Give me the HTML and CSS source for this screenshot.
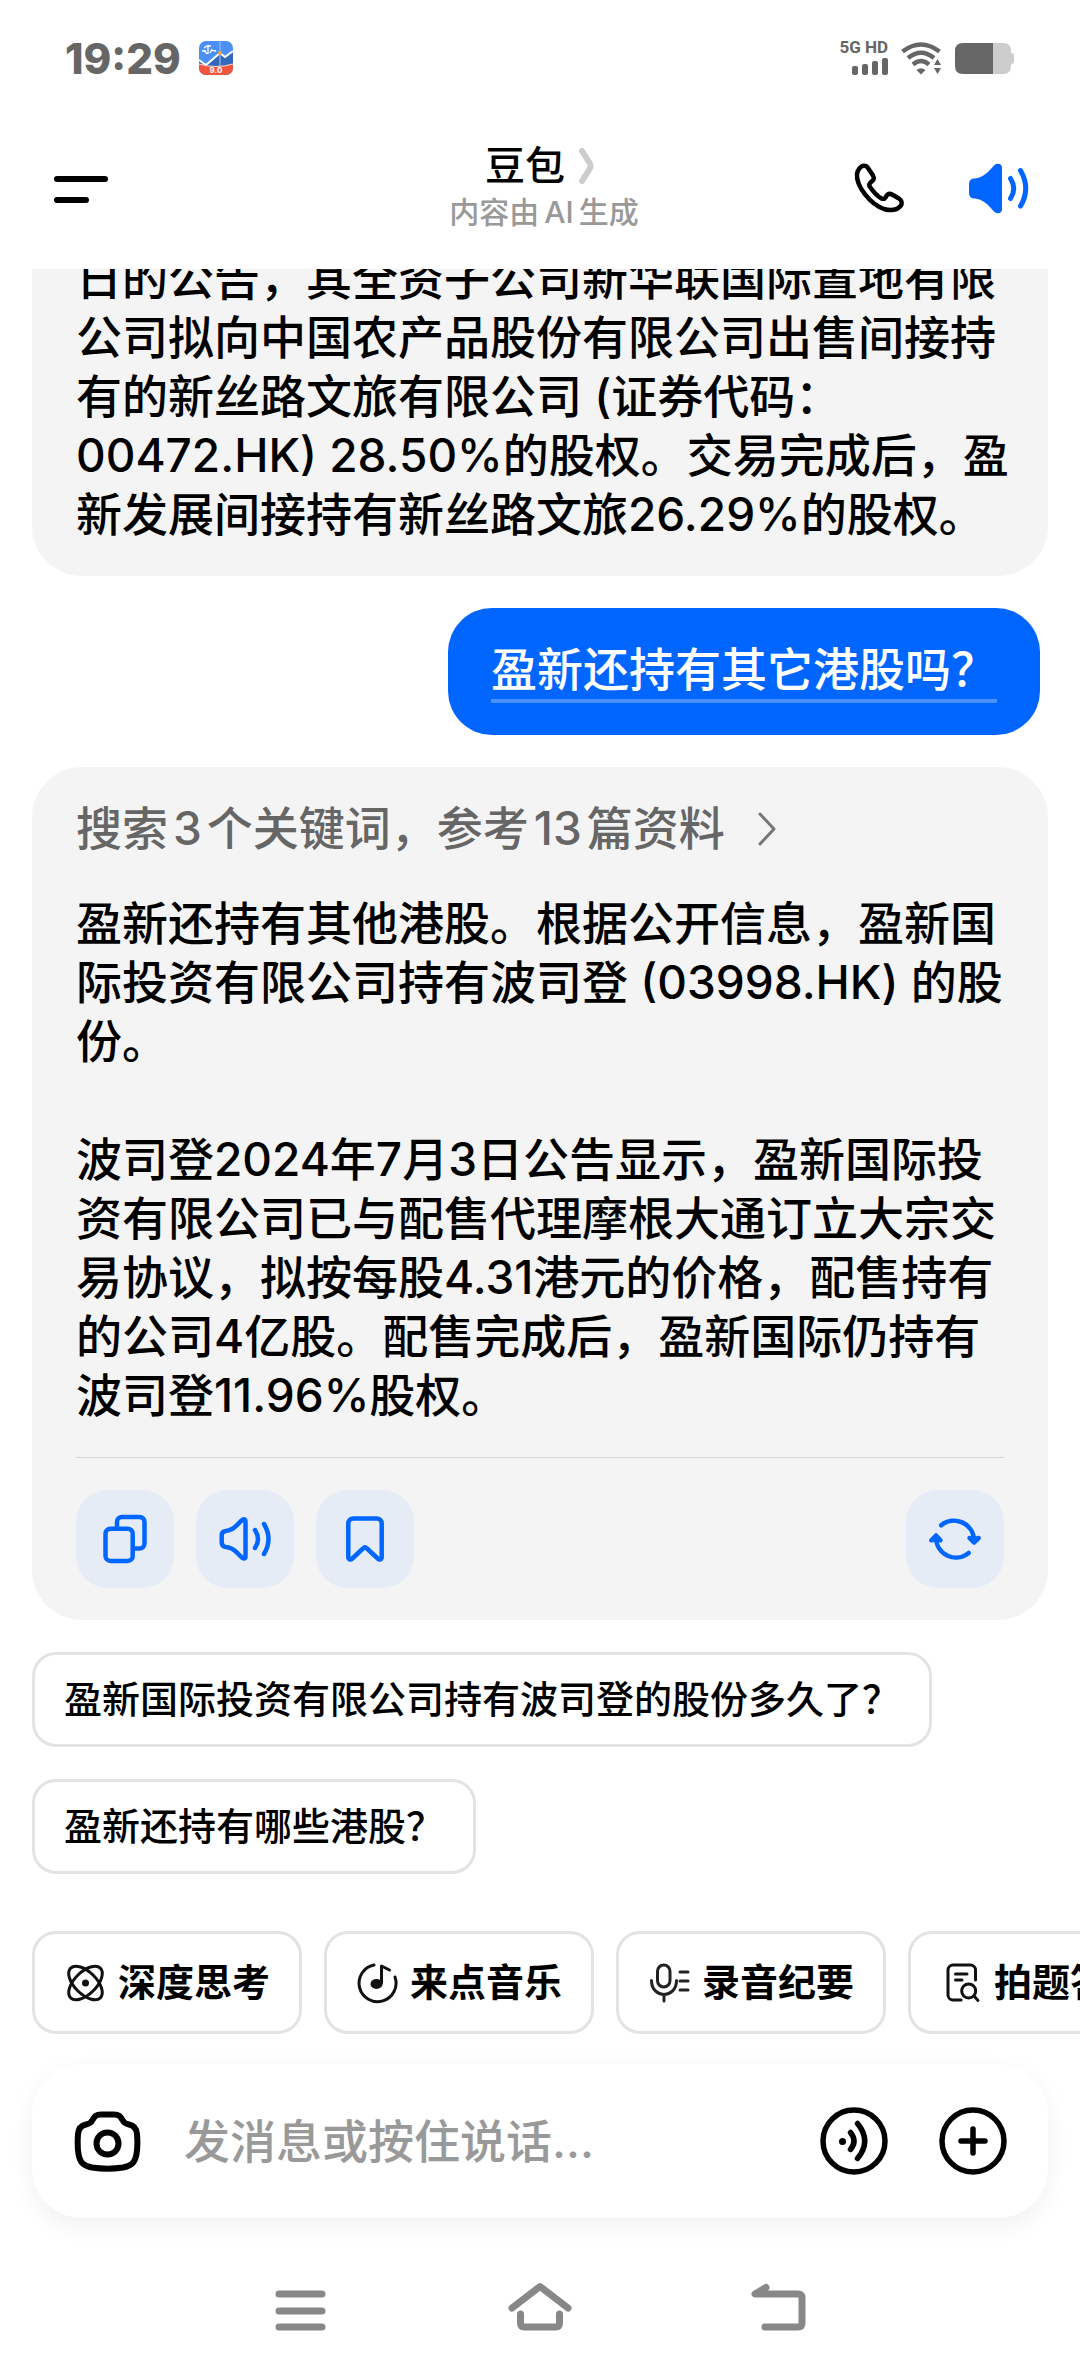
FILE: index.html
```html
<!DOCTYPE html>
<html lang="zh-CN">
<head>
  <meta charset="UTF-8">
  <meta name="viewport" content="width=device-width, initial-scale=1.0">
  <title>豆包</title>
  <link rel="stylesheet" href="styles.css">
</head>
<body>
  <!-- Status bar -->
  <div class="status-bar">
    <span class="clock">19:29</span>
    <svg class="app-icon" width="34" height="34" viewBox="0 0 34 34">
      <defs>
        <clipPath id="app-shape"><rect width="34" height="34" rx="7"/></clipPath>
      </defs>
      <g clip-path="url(#app-shape)">
        <rect width="34" height="34" fill="#4a90f7"/>
        <path d="M0 19l7 5L21 12l5 4 8-6v16H0z" fill="#3468bd"/>
        <path d="M0 19l7 5L21 12l5 4 8-6" fill="none" stroke="#fff" stroke-width="2"/>
        <path d="M21 0v26" stroke="#a9c6ee" stroke-width="1"/>
        <path d="M3 10h4M5 7l3-2h4M9 4v4M12 9l5 1M5 9l3 4M9 8v5M13 8l-2 4" fill="none" stroke="#fff" stroke-width="1.3"/>
        <circle cx="21" cy="12" r="2" fill="#f2a33a"/>
        <path d="M0 23q17 5 34 0v11H0z" fill="#f0563d"/>
        <path d="M0 23q17 5 34 0" fill="none" stroke="#ffd9cf" stroke-width="1"/>
        <text class="app-version" x="17" y="32" text-anchor="middle">9.0</text>
      </g>
    </svg>
    <div class="status-right">
      <div class="signal">
        <span class="network">5G HD</span>
        <svg width="36" height="17" viewBox="0 0 36 17" fill="#666">
          <rect x="0" y="8" width="6" height="9" rx="2"/>
          <rect x="10" y="6" width="6" height="11" rx="2"/>
          <rect x="20" y="3" width="6" height="14" rx="2"/>
          <rect x="30" y="0" width="6" height="17" rx="2"/>
        </svg>
      </div>
      <svg width="41" height="33" viewBox="0 0 41 33">
        <g fill="none" stroke="#666" stroke-width="4.500">
          <path d="M1.500 9.500Q20 -4.500 38.500 9.500"/>
          <path d="M7 16Q20 5.500 33 16"/>
          <path d="M12 22.500Q20 15.500 28 22.500"/>
        </g>
        <path d="M15.500 28q4.500-3.500 9 0L20 32.500z" fill="#666"/>
        <path d="M33 23l3.500-6 3.500 6zM33 26l3.500 6 3.500-6z" fill="#666"/>
      </svg>
      <svg width="60" height="31" viewBox="0 0 60 31">
        <path d="M38 0h10q8 0 8 8v2q3 0 3 3v5q0 3-3 3v2q0 8-8 8H38z" fill="#ccc"/>
        <path d="M8 0h30v31H8q-8 0-8-8V8q0-8 8-8z" fill="#666"/>
      </svg>
    </div>
  </div>

  <!-- Header -->
  <header class="header">
    <button class="icon-btn" aria-label="菜单">
      <svg width="56" height="30" viewBox="0 0 56 30" stroke="#000" stroke-width="6" stroke-linecap="round">
        <path d="M4 5h48M4 26h29"/>
      </svg>
    </button>
    <div class="header-title">
      <a class="title-link" href="#">
        <h1>豆包</h1>
        <svg width="16" height="38" viewBox="0 0 16 38" fill="none" stroke="#ccc" stroke-width="6" stroke-linecap="round" stroke-linejoin="round">
          <path d="M3 4l7 11q3 4 0 8L3 34"/>
        </svg>
      </a>
      <p>内容由<span class="latin">AI</span>生成</p>
    </div>
    <div class="header-actions">
      <button class="icon-btn" aria-label="语音通话">
        <svg width="60" height="60" viewBox="0 0 60 60" fill="none" stroke="#000" stroke-width="4.500" stroke-linejoin="round">
          <path d="M9 10C12 5.500 16 6 18 9L23 16.500C25 20 23 21.500 20.500 23.500C19 25 19 26.500 20 28C23.500 33 27 37 31.500 39.500C33 40.300 34.500 40 35.500 38.500C37 35.500 39 34 42 35.500L49 39.500C52 41.500 52.500 44.500 50.500 47C47 51 41 52 34 50C20 45 6 27 7 15C7.200 13 8 11.500 9 10Z"/>
        </svg>
      </button>
      <button class="icon-btn" aria-label="朗读">
        <svg width="70" height="60" viewBox="0 0 70 60">
          <path d="M4 26c0-5 2-6.500 6-6.500c8-1 13-6 19-13c3-3 8-2 8 2v42c0 4-5 5-8 2c-6-7-11-12-19-13c-4 0-6-1.500-6-6.500z" fill="#06f"/>
          <path d="M45.500 19.500Q52 29.500 45.500 39.500M55.500 11.500Q66 29.500 55.500 47" fill="none" stroke="#06f" stroke-width="5" stroke-linecap="round"/>
        </svg>
      </button>
    </div>
  </header>

  <!-- Conversation -->
  <main class="conversation">
    <article class="card card-scrolled">
      <p>日的公告，其全资子公司新华联国际置地有限公司拟向中国农产品股份有限公司出售间接持有的新丝路文旅有限公司 (证券代码：00472.HK) 28.50%的股权。交易完成后，盈新发展间接持有新丝路文旅26.29%的股权。</p>
    </article>

    <div class="question">
      <span>盈新还持有其它港股吗？</span>
    </div>

    <article class="card card-answer">
      <a class="sources" href="#">
        <span>搜索<span class="latin">3</span>个关键词，参考<span class="latin">13</span>篇资料</span>
        <svg width="22" height="36" viewBox="0 0 22 36" fill="none" stroke="#777" stroke-width="3" stroke-linecap="round" stroke-linejoin="round">
          <path d="M3 3l14 15L3 33"/>
        </svg>
      </a>
      <div class="answer-text">
        <p>盈新还持有其他港股。根据公开信息，盈新国际投资有限公司持有波司登 (03998.HK) 的股份。</p>
        <p>波司登2024年7月3日公告显示，盈新国际投资有限公司已与配售代理摩根大通订立大宗交易协议，拟按每股4.31港元的价格，配售持有的公司4亿股。配售完成后，盈新国际仍持有波司登11.96%股权。</p>
      </div>
      <div class="card-actions">
        <button class="action" aria-label="复制">
          <svg viewBox="0 0 98 98">
            <rect x="29.500" y="38.700" width="27.200" height="32.200" rx="5"/>
            <path d="M41 38V32a5 5 0 0 1 5-5H63.500a5 5 0 0 1 5 5V53.500a5 5 0 0 1-5 5H57"/>
          </svg>
        </button>
        <button class="action" aria-label="播放">
          <svg viewBox="0 0 98 98">
            <path d="M25.700 45.500c0-3 1-4.300 4-4.600c5-.3 8-2.500 11-5.500l5-5c2-2 3.800-1.200 3.800 1v35c0 2.200-1.800 3-3.800 1l-5-5c-3-3-6-5.200-11-5.500c-3-.3-4-1.600-4-4.600z"/>
            <path d="M59 40Q65 49 59 58M68 34Q77 49 68 64"/>
          </svg>
        </button>
        <button class="action" aria-label="收藏">
          <svg viewBox="0 0 98 98">
            <path d="M32.300 33.500a5 5 0 0 1 5-5H60.700a5 5 0 0 1 5 5V67c0 2.500-2 3.300-4 1.500L51 58.500c-1.300-1.300-2.700-1.300-4 0L36.300 68.500c-2 1.800-4 1-4-1.500z"/>
          </svg>
        </button>
        <button class="action action-last" aria-label="重新生成">
          <svg viewBox="0 0 98 98">
            <path d="M35.200 35.300A20 20 0 0 1 68 50M30 48A20 20 0 0 0 62.700 63"/>
            <path d="M63.500 48l4.500 4.500 4.700-4.500-4.700 1zM25.300 50.300L30 45.500l4.500 4.800L30 49z"/>
          </svg>
        </button>
      </div>
    </article>

    <div class="suggestions">
      <button class="suggestion">盈新国际投资有限公司持有波司登的股份多久了？</button>
      <button class="suggestion">盈新还持有哪些港股？</button>
    </div>
  </main>

  <!-- Shortcuts -->
  <nav class="chips">
    <button class="chip">
      <svg width="44" height="44" viewBox="0 0 44 44" fill="none" stroke="#111" stroke-width="3">
        <ellipse cx="21.500" cy="22" rx="21" ry="11" transform="rotate(45 21.500 22)"/>
        <ellipse cx="21.500" cy="22" rx="21" ry="11" transform="rotate(-45 21.500 22)"/>
        <circle cx="21.500" cy="22" r="3.500" fill="#111" stroke="none"/>
      </svg>
      深度思考
    </button>
    <button class="chip">
      <svg width="44" height="44" viewBox="0 0 44 44" fill="none" stroke="#111" stroke-width="3" stroke-linecap="round" stroke-linejoin="round">
        <path d="M18 4A18.500 18.500 0 1 0 39 16M25.500 22V5l8 4"/>
        <ellipse cx="20.500" cy="23" rx="6" ry="5" fill="#111" stroke="none"/>
      </svg>
      来点音乐
    </button>
    <button class="chip">
      <svg width="44" height="44" viewBox="0 0 44 44" fill="none" stroke="#222" stroke-width="3" stroke-linecap="round">
        <rect x="9.500" y="4" width="12.500" height="22" rx="6.200"/>
        <path d="M3.500 19.500C3.500 38 28.500 38 28.500 19.500M16 34v6M32 11h8M32 20h8M32 29h8"/>
      </svg>
      录音纪要
    </button>
    <button class="chip">
      <svg width="44" height="44" viewBox="0 0 44 44" fill="none" stroke="#111" stroke-width="3" stroke-linecap="round">
        <path d="M35.500 19V9a5 5 0 0 0-5-5H13a5 5 0 0 0-5 5V34a5 5 0 0 0 5 5H21M15.500 13H27M15.500 19H22"/>
        <circle cx="28.700" cy="30" r="7"/>
        <path d="M34 35l4 4.500"/>
      </svg>
      拍题答疑
    </button>
  </nav>

  <!-- Composer -->
  <form class="composer">
    <button type="button" class="icon-btn" aria-label="拍照">
      <svg width="68" height="68" viewBox="0 0 68 68" fill="none" stroke="#000" stroke-width="6">
        <path d="M28 7.500H41C46 7.500 47.500 9.500 49.500 13C51 16 53 17 56 17.500C61 18.500 63.500 21.500 64 27C64.600 34 64.600 41 63.500 47C62 56 58 59 50 60.500C40 62 29 62 19 60.500C11 59 7 56 5.500 47C4.500 41 4.500 34 5 27C5.500 21.500 8 18.500 13 17.500C16 17 18 16 19.500 13C21.500 9.500 23 7.500 28 7.500Z"/>
        <circle cx="34.500" cy="36.500" r="11"/>
      </svg>
    </button>
    <input type="text" aria-label="发消息" placeholder="发消息或按住说话...">
    <button type="button" class="icon-btn" aria-label="语音输入">
      <svg width="68" height="68" viewBox="0 0 68 68" fill="none" stroke="#000" stroke-width="5.500" stroke-linecap="round">
        <circle cx="34" cy="34" r="31"/>
        <path d="M30.500 25.500Q37.500 34 30.500 42.500M37.500 16.500Q52 34 37.500 51.500"/>
        <circle cx="22.500" cy="34.500" r="3.500" fill="#000" stroke="none"/>
      </svg>
    </button>
    <button type="button" class="icon-btn" aria-label="更多">
      <svg width="68" height="68" viewBox="0 0 68 68" fill="none" stroke="#000" stroke-width="5.500" stroke-linecap="round">
        <circle cx="34" cy="34" r="31"/>
        <path d="M34 22v24M22 34h24"/>
      </svg>
    </button>
  </form>

  <!-- System navigation -->
  <nav class="system-nav">
    <button class="icon-btn" aria-label="最近任务">
      <svg width="66" height="52" viewBox="0 0 66 52">
        <path d="M12 13h43M12 30h43M12 46h43"/>
      </svg>
    </button>
    <button class="icon-btn" aria-label="主屏幕">
      <svg width="66" height="52" viewBox="0 0 66 52">
        <path d="M5 27L33 5.500 61 27M13.500 33v9q0 4 4 4h31q4 0 4-4v-9"/>
      </svg>
    </button>
    <button class="icon-btn" aria-label="返回">
      <svg width="66" height="52" viewBox="0 0 66 52">
        <path d="M19 6.500L8 13h43q4 0 4 4v25q0 4-4 4H18"/>
      </svg>
    </button>
  </nav>
</body>
</html>
```

FILE: styles.css
```css
* {
  box-sizing: border-box;
}
body {
  margin: 0;
  background: #fff;
  color: #000;
  font-family: Inter, "Noto Sans CJK SC", sans-serif;
  font-weight: 500;
  overflow-x: hidden;
}
h1,
p {
  margin: 0;
}
svg {
  display: block;
  flex: none;
}
a {
  color: inherit;
  text-decoration: none;
}
button {
  padding: 0;
  border: none;
  background: none;
  color: inherit;
  font: inherit;
  cursor: pointer;
}
.latin {
  margin: 0 5px;
}

/* Status bar */
.status-bar {
  display: flex;
  align-items: center;
  height: 116px;
  padding: 0 65px;
  color: #666;
}
.clock {
  font-size: 42px;
  font-weight: 800;
}
.app-icon {
  margin-left: 18px;
}
.app-version {
  font-size: 8px;
  font-weight: 700;
  fill: #fff;
}
.status-right {
  display: flex;
  align-items: center;
  gap: 13px;
  margin-left: auto;
}
.signal {
  display: flex;
  flex-direction: column;
  align-items: flex-end;
  gap: 4px;
}
.network {
  font-family: Roboto, sans-serif;
  font-size: 17px;
  font-weight: 700;
  line-height: 13px;
}

/* Header */
.header {
  display: grid;
  grid-template-columns: 1fr auto 1fr;
  align-items: center;
  height: 153px;
  padding: 0 45px 8px 53px;
}
.header > .icon-btn {
  justify-self: start;
}
.header-title {
  text-align: center;
}
.title-link {
  display: flex;
  align-items: center;
  justify-content: center;
  gap: 14px;
  padding-right: 8px;
}
.header-title h1 {
  font-size: 40px;
  font-weight: 500;
  line-height: 46px;
}
.header-title p {
  color: #999;
  font-size: 30px;
  line-height: 46px;
}
.header-actions {
  display: flex;
  justify-content: flex-end;
  gap: 55px;
}

/* Conversation */
.conversation {
  display: flex;
  flex-direction: column;
  gap: 32px;
  padding: 0 32px;
  overflow: hidden;
  font-size: 46px;
  line-height: 59px;
}
.card {
  padding: 32px 44px;
  border-radius: 50px;
  background: #f4f4f4;
}
.card-scrolled {
  margin-top: -20px;
  padding-top: 0;
  padding-right: 32px;
  border-radius: 0 0 50px 50px;
}
.question {
  align-self: flex-end;
  margin-right: 8px;
  padding: 32px 43px;
  border-radius: 44px;
  background: #06f;
  color: #fff;
}
.question span {
  display: block;
  border-bottom: 4px solid #4791ff;
}
.sources {
  display: flex;
  align-items: center;
  gap: 32px;
  color: #666;
}
.answer-text {
  display: flex;
  flex-direction: column;
  gap: 59px;
  padding: 36px 0 32px;
}
.card-actions {
  display: flex;
  gap: 22px;
  padding-top: 32px;
  border-top: 1px solid #d9d9d9;
}
.action {
  width: 98px;
  height: 98px;
  border-radius: 32px;
  background: #e5ecf6;
}
.action svg {
  fill: none;
  stroke: #06f;
  stroke-width: 4.5;
  stroke-linecap: round;
  stroke-linejoin: round;
}
.action-last {
  margin-left: auto;
}

/* Suggestions */
.suggestions {
  display: flex;
  flex-direction: column;
  align-items: flex-start;
  gap: 32px;
}
.suggestion {
  padding: 16px 29px;
  border: 3px solid #e3e3e3;
  border-radius: 24px;
  font-size: 38px;
  line-height: 57px;
}

/* Shortcuts */
.chips {
  display: flex;
  gap: 22px;
  padding: 57px 0 30px 32px;
  overflow: hidden;
}
.chip {
  display: flex;
  flex: none;
  align-items: center;
  gap: 10px;
  padding: 20px 29px;
  border: 3px solid #e3e3e3;
  border-radius: 24px;
  font-size: 38px;
  font-weight: 700;
  line-height: 57px;
}

/* Composer */
.composer {
  display: flex;
  align-items: center;
  gap: 51px;
  height: 154px;
  margin: 0 32px;
  padding: 0 41px;
  border-radius: 50px;
  background: #fff;
  box-shadow: 0 8px 24px rgba(0, 0, 0, 0.06);
}
.composer input {
  flex: 1;
  min-width: 0;
  margin-left: -8px;
  padding: 0;
  border: none;
  outline: none;
  background: none;
  font: inherit;
  font-size: 46px;
}
.composer input::placeholder {
  color: #999;
}

/* System navigation */
.system-nav {
  display: flex;
  justify-content: center;
  gap: 174px;
  padding: 63px 0 40px;
}
.system-nav svg {
  fill: none;
  stroke: #888;
  stroke-width: 7;
  stroke-linecap: round;
  stroke-linejoin: round;
}
```
